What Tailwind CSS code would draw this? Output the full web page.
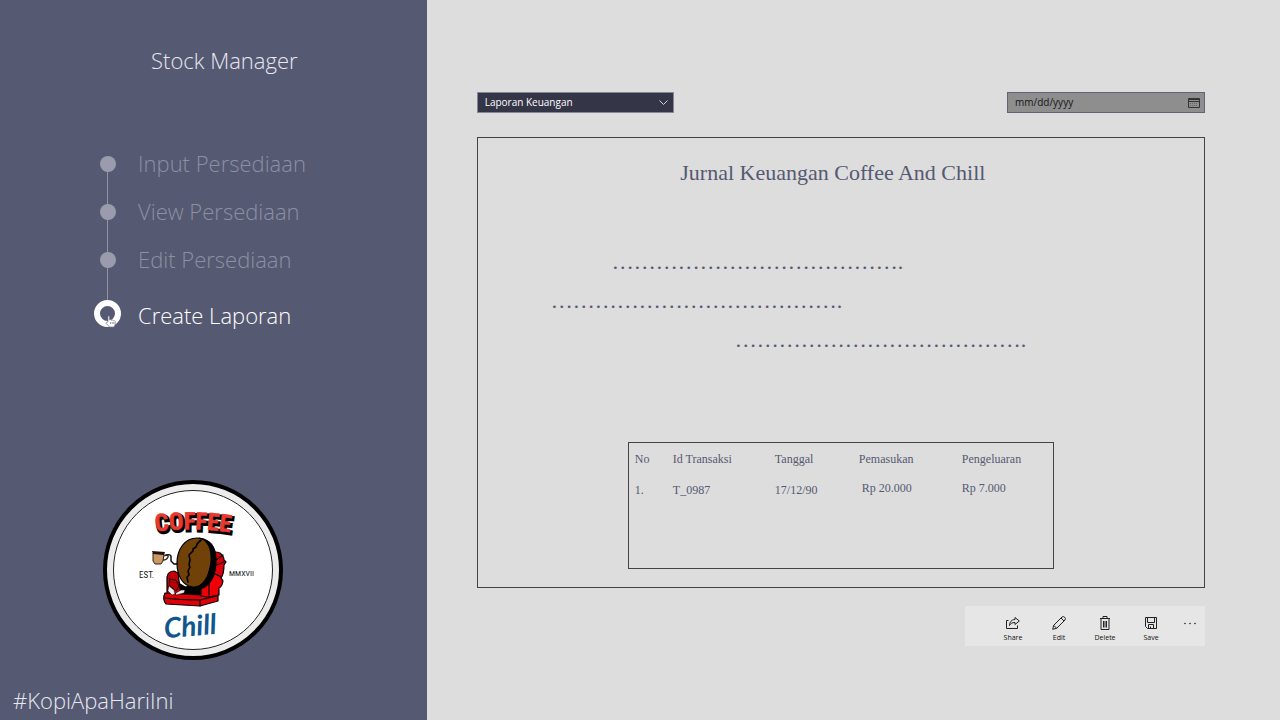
<!DOCTYPE html>
<html lang="id">
<head>
<meta charset="utf-8">
<meta name="viewport" content="width=device-width, initial-scale=1">
<title>Stock Manager</title>
<script src="https://cdn.jsdelivr.net/npm/@tailwindcss/browser@4"></script>
</head>
<body class="flex min-h-screen bg-[#dddddd] font-['Open_Sans','Noto_Sans',sans-serif]">
<aside class="flex w-1/3 shrink-0 flex-col bg-[#555972] text-[#e8e8f2]">
  <h1 class="mt-11 pl-[22px] text-center text-[22px] leading-8 font-light">Stock Manager</h1>
  <nav class="mt-16 pl-[94px]" aria-label="Menu">
    <ol class="relative text-[22px] font-light text-[#8d90a3]">
      <li class="absolute top-6 left-[13px] h-[138px] w-px bg-[#9294a6]" aria-hidden="true"></li>
      <li><a href="#input" class="relative flex h-12 items-center gap-[17px]"><span class="flex w-[27px] justify-center"><span class="size-4 rounded-full bg-[#9a9bac]"></span></span><span class="pb-[2px]">Input Persediaan</span></a></li>
      <li><a href="#view" class="relative flex h-12 items-center gap-[17px]"><span class="flex w-[27px] justify-center"><span class="size-4 rounded-full bg-[#9a9bac]"></span></span><span class="pb-[2px]">View Persediaan</span></a></li>
      <li><a href="#edit" class="relative flex h-12 items-center gap-[17px]"><span class="flex w-[27px] justify-center"><span class="size-4 rounded-full bg-[#9a9bac]"></span></span><span class="pb-[2px]">Edit Persediaan</span></a></li>
      <li><a href="#laporan" aria-current="page" class="relative flex h-[58px] items-center gap-[17px] text-white"><span class="relative size-[27px] rounded-full border-[6px] border-white bg-[#555972]">
        <svg class="absolute top-[9px] left-[5px] h-[13px] w-3" viewBox="0 0 12 13" fill="#fff" stroke="#77798d" stroke-width=".7" aria-hidden="true"><path d="M3 7V1.5Q3.700.5 4.500 1.500V5l1-.4 1 .7 1-.3.9.7 1-.2.8.9v2.800L9 12H4.500L1 8.200q0-1.200 1-1z"/><path d="M5.500 7v2M7.200 7v2M8.800 7v2"/></svg>
      </span><span class="pt-1">Create Laporan</span></a></li>
    </ol>
  </nav>
  <svg class="mt-auto ml-[103px] size-[180px]" viewBox="0 0 180 180" role="img" aria-label="Coffee Chill">
    <circle cx="90" cy="90" r="88" fill="#ececec" stroke="#000" stroke-width="4"/>
    <circle cx="90" cy="90" r="79.500" fill="#fff" stroke="#222" stroke-width="1"/>
    <g font-family="'Liberation Sans Narrow','Roboto Condensed','Liberation Sans',sans-serif" font-weight="700" font-size="24" text-anchor="middle">
      <path id="arch" d="M44 53Q90 45 136 54" fill="none"/>
      <text fill="#000" stroke="#000" stroke-width="2.500" transform="translate(1.500 2)" aria-hidden="true"><textPath href="#arch" startOffset="50%">COFFEE</textPath></text>
      <text fill="#e8392f" stroke="#e8392f" stroke-width=".5"><textPath href="#arch" startOffset="50%">COFFEE</textPath></text>
    </g>
    <g stroke="#000" stroke-width="1.200" stroke-linejoin="round" stroke-linecap="round">
      <path fill="#d90009" d="M108 73q4-2 9 0 4 3 4 7l2 2-2 3q0 9-3 13l-20 8z"/>
      <path d="M113 80l7-5M113 85l8-3" fill="none"/>
      <path fill="#000" d="M72 101l10 6 16-3 16-9-10 20-30 2z"/>
      <path fill="#c60009" d="M64 97q1-6 7-6l4 2 3 22-14-1z"/>
      <path fill="#e00008" d="M62 113l36 2 17-2v8l-18 5-34-2q-4-5-1-11z"/>
      <path fill="none" d="M62 118q15 2 35 2l17-4M97 120v6"/>
      <path fill="#ed0008" d="M98 116V99q1-5 9-5 10-1 13 7-1 6-4 7v7l-11 2z"/>
      <path d="M107 99q-2 3-1 7v9" fill="none"/>
      <path fill="#000" d="M96 58q17 2 17 22 0 21-13 28-6 2-11-1z"/>
      <path fill="#704108" d="M94 58c11 0 15 11 14 24-2 16-9 26-18 25-10-1-16-11-16-24 0-14 8-25 20-25z"/>
      <path fill="none" stroke-width="1.600" d="M98 60q-4 3-5 7l-3 2 0 2-4 4 1 5-1 5 1 2-2 4 1 4-2 2 1 5"/>
      <path fill="#b50009" stroke-width=".9" d="M67 99l6 1 3 6-3 5-6-5z"/>
      <path fill="#eee" stroke-width=".5" d="M66 106l5 4 1 4-3 1-4-4zM73 113l5-3 4 0-1 3-8 2z"/>
      <path fill="none" stroke-width="1.400" d="M63 75q4-1 5 1l0 5 3 3h3"/>
    </g>
    <path fill="#c99866" stroke="#302318" d="M50 73l11 1-1 7-2 3h-6l-2-3z"/>
    <path fill="#201208" d="M49 71l13 1-1 3-11-1z"/>
    <path fill="none" stroke="#302318" stroke-width="1.300" d="M61 76q5-2 4 1-1 3-5 3"/>
    <g font-family="'Liberation Sans Narrow','Roboto Condensed','Liberation Sans',sans-serif" fill="#161616">
      <text x="36" y="98" font-size="9">EST.</text>
      <text x="126" y="96" font-size="8">MMXVII</text>
    </g>
    <text x="87" y="156" text-anchor="middle" transform="rotate(-5 87 145)" font-family="Lato,sans-serif" font-style="italic" font-weight="700" font-size="28" fill="#11568c">Chill</text>
  </svg>
  <p class="mt-6 mb-1 pl-[13px] text-[22px] leading-8 font-light">#KopiApaHariIni</p>
</aside>

<main class="flex min-w-0 flex-1 flex-col pt-[92px] pr-[75px] pl-[50px]">
  <div class="flex justify-between">
    <label class="relative block w-[197px]">
      <span class="sr-only">Jenis laporan</span>
      <select class="block h-[21px] w-full appearance-none border border-[#85869a] bg-[#343547] pl-[7px] text-[10px] leading-[19px] text-white">
        <option>Laporan Keuangan</option>
      </select>
      <svg class="pointer-events-none absolute top-[6px] right-[6px] size-[9px]" viewBox="0 0 9 9" fill="none" stroke="#d5d5dd" aria-hidden="true"><path d="M.5 2.500l4 4 4-4"/></svg>
    </label>
    <label class="relative block w-[198px]">
      <span class="sr-only">Tanggal laporan</span>
      <input type="date" class="block h-[21px] w-full border border-[#626279] bg-[#8e8e8e] pl-[7px] text-[10px] leading-[19px] text-[#151515] [&::-webkit-calendar-picker-indicator]:opacity-0 [&::-webkit-datetime-edit]:p-0 [&::-webkit-datetime-edit-fields-wrapper]:p-0 [&::-webkit-datetime-edit-month-field]:p-0 [&::-webkit-datetime-edit-day-field]:p-0 [&::-webkit-datetime-edit-year-field]:p-0">
      <svg class="pointer-events-none absolute top-[5px] right-[5px] h-[11px] w-3" viewBox="0 0 12 11" fill="none" stroke="#333" aria-hidden="true"><path d="M.5 1.500h11v9H.5zM.5 2.500h11M.5 4.500h11"/><path stroke="#666" stroke-dasharray="1 1" d="M2 6.500h8M2 8.500h8"/></svg>
    </label>
  </div>

  <article class="mt-6 flex min-h-[451px] flex-col border border-[#444448] font-['Liberation_Serif',serif] text-[22px] text-[#555972]">
    <h2 class="mt-[19px] pr-4 text-center leading-8">Jurnal Keuangan Coffee And Chill</h2>
    <div class="mt-[53px] leading-[39px] whitespace-nowrap">
      <p class="pl-[134px]">………………………………….</p>
      <p class="pl-[73px]">………………………………….</p>
      <p class="pl-[257px]">………………………………….</p>
    </div>
    <div class="mx-auto mt-[83px] min-h-[127px] w-[426px] border border-[#444448] pt-[6px] pl-[6px]">
      <table class="w-full table-fixed text-left text-[12px] leading-5">
        <colgroup><col class="w-[38px]"><col class="w-[102px]"><col class="w-[84px]"><col class="w-[103px]"><col></colgroup>
        <thead><tr><th class="font-normal">No</th><th class="font-normal">Id Transaksi</th><th class="font-normal">Tanggal</th><th class="font-normal">Pemasukan</th><th class="font-normal">Pengeluaran</th></tr></thead>
        <tbody><tr class="align-bottom"><td class="pt-[11px]">1.</td><td>T_0987</td><td>17/12/90</td><td class="pb-[2px] pl-[3px]">Rp 20.000</td><td class="pb-[2px]">Rp 7.000</td></tr></tbody>
      </table>
    </div>
  </article>

  <div role="toolbar" aria-label="Tindakan" class="mt-[18px] flex h-10 w-60 justify-end self-end bg-[#e6e6e6] text-[7px] leading-[10px] text-[#111]">
    <button type="button" class="flex w-[46px] flex-col items-center gap-[3px] pt-[10px]"><svg class="size-[14px]" viewBox="0 0 14 14" fill="none" stroke="#222" aria-hidden="true"><path d="M2.500 4.500h-2v8h11v-3"/><path d="M9 1.500L13.300 5 9 8.500v-2c-3 0-4.500 1-5.500 3 .2-3.500 2-6 5.500-6z"/></svg>Share</button>
    <button type="button" class="flex w-[46px] flex-col items-center gap-[3px] pt-[10px]"><svg class="size-[14px]" viewBox="0 0 14 14" fill="none" stroke="#222" aria-hidden="true"><path d="M.7 13.300l1-4L10 1q1.500-1 2.700.3 1.200 1.200.3 2.700l-8.300 8.300zM1.700 9.300l3 3M9 2l3 3"/></svg>Edit</button>
    <button type="button" class="flex w-[46px] flex-col items-center gap-[3px] pt-[10px]"><svg class="size-[14px]" viewBox="0 0 14 14" fill="none" stroke="#222" aria-hidden="true"><path d="M2 2.500h10M5 2.500v-2h4v2M3 2.500v11h8v-11M5.500 5v6.500M7 5v6.500M8.500 5v6.500"/></svg>Delete</button>
    <button type="button" class="flex w-[46px] flex-col items-center gap-[3px] pt-[10px]"><svg class="size-[14px]" viewBox="0 0 14 14" fill="none" stroke="#222" aria-hidden="true"><path d="M1.500 1.500h11v11h-9l-2-2zM3.500 1.500v5h7v-5M4.500 12.500v-4h5v4M6.500 10.500v2"/></svg>Save</button>
    <button type="button" aria-label="Lainnya" class="flex w-[31px] justify-center pt-4"><svg class="h-[3px] w-3" viewBox="0 0 12 3" fill="#222" aria-hidden="true"><circle cx="1" cy="1.500" r=".8"/><circle cx="6" cy="1.500" r=".8"/><circle cx="11" cy="1.500" r=".8"/></svg></button>
  </div>
</main>
</body>
</html>
